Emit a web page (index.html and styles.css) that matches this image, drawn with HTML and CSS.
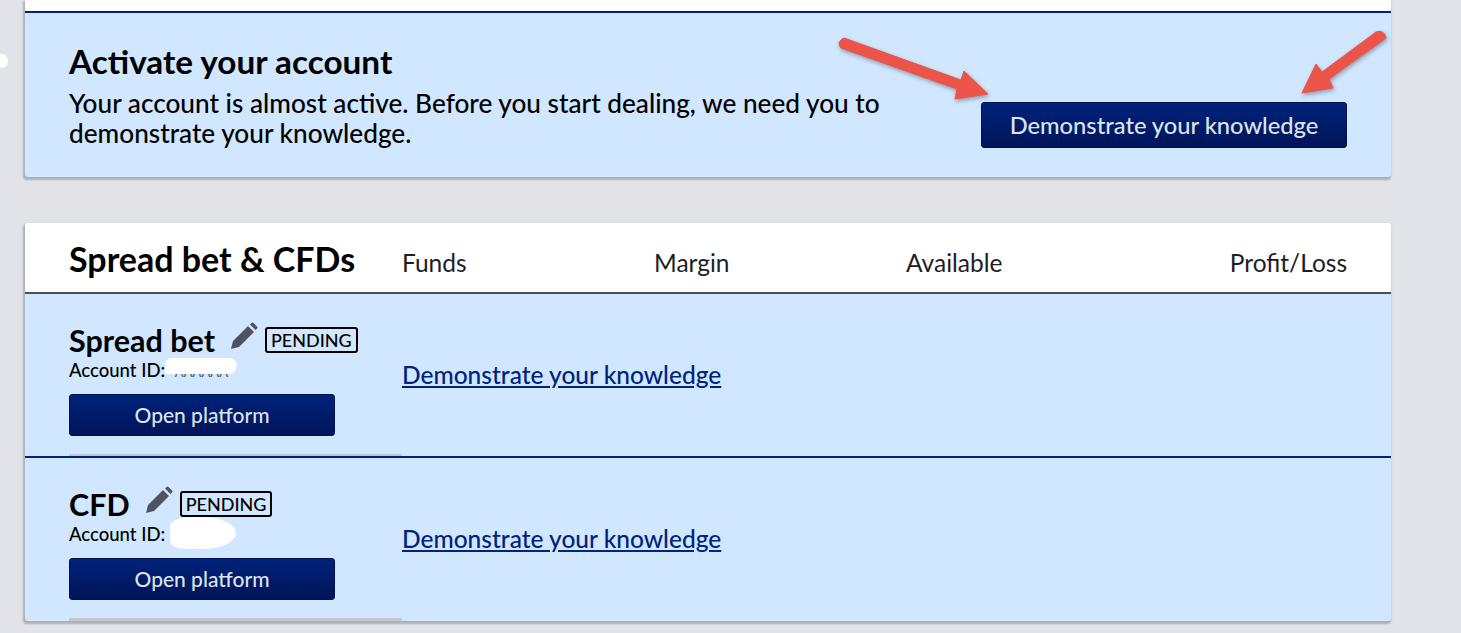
FILE: index.html
```html
<!DOCTYPE html>
<html lang="en">
<head>
    <meta charset="UTF-8">
    <meta name="viewport" content="width=device-width, initial-scale=1.0">
    <title>My accounts</title>
    <link rel="stylesheet" href="styles.css">
</head>
<body>
    <span class="dot"></span>

    <div class="card">
        <div class="top-strip"></div>
        <div class="activate">
            <div class="activate-text">
                <h2>Activate your account</h2>
                <p>Your account is almost active. Before you start dealing, we need you to demonstrate your knowledge.</p>
            </div>
            <a class="btn btn-large" href="#">Demonstrate your knowledge</a>
        </div>
    </div>

    <div class="card card-accounts">
        <div class="head">
            <h2>Spread bet &amp; CFDs</h2>
            <div class="head-cols">
                <span>Funds</span>
                <span>Margin</span>
                <span>Available</span>
                <span class="right">Profit/Loss</span>
            </div>
        </div>

        <div class="row">
            <div class="account">
                <div class="account-title">
                    <h3>Spread bet</h3>
                    <svg class="pencil" viewBox="0 0 28 28"><path d="M1 27l2-8L18 4l6 6L9 25zM20 2.500l1.500-1.500q1-1 2 0l3.500 3.500q1 1 0 2L25.500 8z"/></svg>
                    <span class="badge">PENDING</span>
                </div>
                <div class="account-id">Account ID: <span class="masked">AAAAAA</span><span class="blur blur-one"></span></div>
                <a class="btn" href="#">Open platform</a>
            </div>
            <a class="link" href="#">Demonstrate your knowledge</a>
        </div>

        <div class="row">
            <div class="account">
                <div class="account-title">
                    <h3>CFD</h3>
                    <svg class="pencil" viewBox="0 0 28 28"><path d="M1 27l2-8L18 4l6 6L9 25zM20 2.500l1.500-1.500q1-1 2 0l3.500 3.500q1 1 0 2L25.500 8z"/></svg>
                    <span class="badge">PENDING</span>
                </div>
                <div class="account-id">Account ID: <span class="blur blur-two"></span></div>
                <a class="btn" href="#">Open platform</a>
            </div>
            <a class="link" href="#">Demonstrate your knowledge</a>
        </div>
    </div>

    <svg class="arrows" viewBox="0 0 1461 633">
        <path d="M844 38L961 80L964 71L988 94L955 99L957 89L841 48Q836 42 844 38Z"/>
        <path d="M1376 32Q1384 29 1386 38L1329 79L1333 88L1302 93L1316 64L1322 72Z"/>
    </svg>
</body>
</html>
```

FILE: styles.css
```css
* {
    margin: 0;
    padding: 0;
    box-sizing: border-box;
}

html, body {
    height: 633px;
    overflow: hidden;
}

body {
    position: relative;
    background-color: #e1e3e8;
    font-family: Lato, "Noto Sans", sans-serif;
    color: #000;
    padding-left: 25px;
}

.dot {
    position: absolute;
    left: -4px;
    top: 54px;
    width: 12px;
    height: 14px;
    border-radius: 50%;
    background-color: #fff;
}

.card {
    width: 1366px;
    border-radius: 0 0 3px 3px;
    background-color: #d0e7ff;
    box-shadow: -1px 2px 2px 1px #aeafb5;
}

.top-strip {
    height: 11px;
    background-color: #fff;
}

.activate {
    height: 166px;
    border-top: 2px solid #00237f;
    padding: 0 44px;
    display: flex;
    align-items: flex-start;
    justify-content: space-between;
}

.activate-text {
    width: 830px;
    padding-top: 29px;
}

.activate h2 {
    font-size: 33.300px;
    line-height: 38px;
    font-weight: 700;
}

.activate p {
    font-size: 26.200px;
    line-height: 30px;
    font-weight: 500;
    margin-top: 8px;
}

.btn {
    display: flex;
    align-items: center;
    justify-content: center;
    height: 42px;
    width: 266px;
    padding-bottom: 2px;
    border: 1px solid #00134f;
    border-radius: 3px;
    background: linear-gradient(#00237b, #001459);
    color: #dce3ee;
    font-size: 21px;
    font-weight: 500;
    text-decoration: none;
}

.btn-large {
    width: 366px;
    height: 46px;
    padding-bottom: 0;
    margin-top: 89px;
    font-size: 23.700px;
}

.card-accounts {
    margin-top: 46px;
    border-radius: 3px;
}

.head {
    height: 71px;
    background-color: #fff;
    border-bottom: 2px solid #4a4f5e;
    border-radius: 3px 3px 0 0;
    padding: 0 44px;
    display: flex;
}

.head h2 {
    width: 333px;
    font-size: 34px;
    line-height: 72px;
    font-weight: 700;
    white-space: nowrap;
}

.head-cols {
    flex: 1;
    display: grid;
    grid-template-columns: 252px 252px 1fr 1fr;
    font-size: 24.500px;
    line-height: 80px;
    color: #1c1e26;
}

.right {
    text-align: right;
}

.row {
    height: 164px;
    padding: 0 44px;
    display: flex;
    align-items: center;
    border-bottom: 2px solid #00237f;
}

.row:last-child {
    height: 163px;
    border-bottom: 0;
}

.account {
    width: 333px;
    height: 100%;
    padding-top: 28px;
    border-bottom: 2px solid #c6c8cc;
}

.row:last-child .account {
    border-bottom-width: 3px;
}

.account-title {
    display: flex;
    align-items: center;
    height: 36px;
}

.account-title h3 {
    font-size: 30.500px;
    font-weight: 700;
    margin-right: 15px;
}

.pencil {
    width: 28px;
    height: 28px;
    margin: -8px 7px 0 0;
    fill: #50535f;
}

.badge {
    border: 2px solid #000;
    border-radius: 3px;
    font-size: 18px;
    line-height: 22px;
    padding: 0 4px;
    margin-top: -1px;
    font-weight: 500;
}

.account-id {
    position: relative;
    font-size: 18.500px;
    line-height: 22px;
    font-weight: 500;
    margin-top: 1px;
    margin-bottom: 13px;
}

.masked {
    color: #4a5568;
    font-size: 13px;
    line-height: 0;
    margin-left: 5px;
}

.blur {
    position: absolute;
    background-color: #fff;
}

.blur-one {
    left: 96px;
    top: -1px;
    width: 72px;
    height: 16px;
    border-radius: 9px 10px 12px 4px;
}

.blur-two {
    left: 101px;
    top: -6px;
    width: 66px;
    height: 32px;
    border-radius: 30% 50% 50% 25%;
}

.link {
    color: #00237f;
    font-size: 24.500px;
    font-weight: 500;
    margin-bottom: 2px;
}

.arrows {
    position: absolute;
    left: 0;
    top: 0;
    width: 1461px;
    height: 633px;
    fill: #ec5349;
    stroke: #ec5349;
    stroke-width: 1;
    stroke-linejoin: round;
    filter: drop-shadow(1px 2px 2px rgba(60, 60, 70, 0.45));
}
```
